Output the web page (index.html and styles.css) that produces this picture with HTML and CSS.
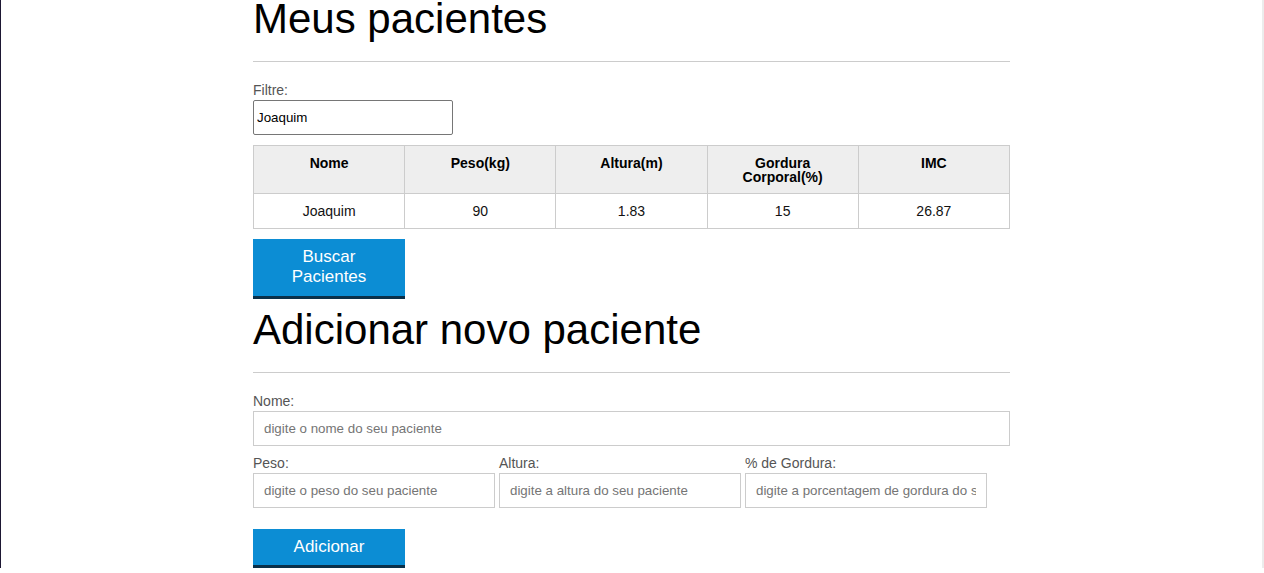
FILE: index.html
```html
<!DOCTYPE html>
<html lang="pt-BR">
<head>
<meta charset="utf-8">
<title>Meus pacientes</title>
<link rel="stylesheet" href="styles.css">
</head>
<body>
<main>
  <section class="container">
    <h2 class="section-title first">Meus pacientes</h2>
    <label class="label" for="filtrar-tabela">Filtre:</label>
    <input class="filter" type="text" id="filtrar-tabela" value="Joaquim">
    <table class="patients">
      <thead>
        <tr>
          <th>Nome</th>
          <th>Peso(kg)</th>
          <th>Altura(m)</th>
          <th>Gordura Corporal(%)</th>
          <th>IMC</th>
        </tr>
      </thead>
      <tbody>
        <tr>
          <td>Joaquim</td>
          <td>90</td>
          <td>1.83</td>
          <td>15</td>
          <td>26.87</td>
        </tr>
      </tbody>
    </table>
    <button class="btn btn-tall" type="button">Buscar Pacientes</button>
  </section>
  <section class="container">
    <h2 class="section-title second">Adicionar novo paciente</h2>
    <form class="form">
      <div class="group">
        <label class="label" for="nome">Nome:</label>
        <input class="field" id="nome" type="text" placeholder="digite o nome do seu paciente">
      </div>
      <div class="row">
        <div class="group small">
          <label class="label" for="peso">Peso:</label>
          <input class="field" id="peso" type="text" placeholder="digite o peso do seu paciente">
        </div>
        <div class="group small">
          <label class="label" for="altura">Altura:</label>
          <input class="field" id="altura" type="text" placeholder="digite a altura do seu paciente">
        </div>
        <div class="group small">
          <label class="label" for="gordura">% de Gordura:</label>
          <input class="field" id="gordura" type="text" placeholder="digite a porcentagem de gordura do seu paciente">
        </div>
      </div>
      <button class="btn btn-add" type="button">Adicionar</button>
    </form>
  </section>
</main>
</body>
</html>
```
FILE: styles.css
```css
html {
  border-left: 1px solid #1d1733;
  border-right: 2px solid #ececec;
  background: #fff;
}

body {
  margin: 0;
  font-family: "Liberation Sans", Arial, sans-serif;
  color: #000;
  background: #fff;
  overflow: hidden;
}

.container {
  width: 757px;
  margin: 0 auto;
}

.section-title {
  font-size: 42px;
  font-weight: normal;
  line-height: 48px;
  margin: 0;
  padding-bottom: 18px;
  border-bottom: 1px solid #ccc;
}

.section-title.first {
  margin-top: -5px;
}

.section-title.second {
  margin-top: 7px;
}

.label {
  display: block;
  font-size: 14px;
  line-height: 16px;
  color: #555;
  margin-top: 20px;
}

.filter {
  display: block;
  box-sizing: border-box;
  width: 200px;
  height: 35px;
  margin-top: 2px;
  padding: 1px 3px;
  border: 1px solid #767676;
  border-radius: 2px;
  font-family: "Liberation Sans", Arial, sans-serif;
  font-size: 13.33px;
  color: #000;
  background: #fff;
}

.patients {
  width: 100%;
  margin-top: 10px;
  border-collapse: collapse;
  table-layout: fixed;
  font-size: 14px;
  line-height: 14px;
}

.patients th,
.patients td {
  border: 1px solid #ccc;
  padding: 10px;
  text-align: center;
  vertical-align: top;
}

.patients th {
  background: #eee;
  font-weight: bold;
  padding-bottom: 9px;
}

.patients td {
  color: #111;
}

.btn {
  display: block;
  width: 152px;
  margin-top: 10px;
  padding: 8px 0;
  border: 0;
  border-bottom: 3px solid #0a3049;
  background: #0c8dd4;
  color: #fff;
  font-family: "Liberation Sans", Arial, sans-serif;
  font-size: 17px;
  line-height: 19.5px;
  text-align: center;
  cursor: pointer;
}

.btn-tall {
  padding: 8px 22px 10px;
}

.btn-add {
  margin-top: 21px;
}

.form .group .label {
  margin-top: 0;
}

.form > .group:first-child .label {
  margin-top: 20px;
}

.row {
  display: flex;
  gap: 4px;
  margin-top: 9px;
}

.group.small {
  width: 242px;
}

.field {
  display: block;
  box-sizing: border-box;
  width: 100%;
  height: 35px;
  margin-top: 2px;
  padding: 0 10px;
  border: 1px solid #ccc;
  border-radius: 0;
  font-family: "Liberation Sans", Arial, sans-serif;
  font-size: 13.33px;
  color: #000;
  background: #fff;
  outline: none;
}

.field::placeholder {
  color: #757575;
}
```
